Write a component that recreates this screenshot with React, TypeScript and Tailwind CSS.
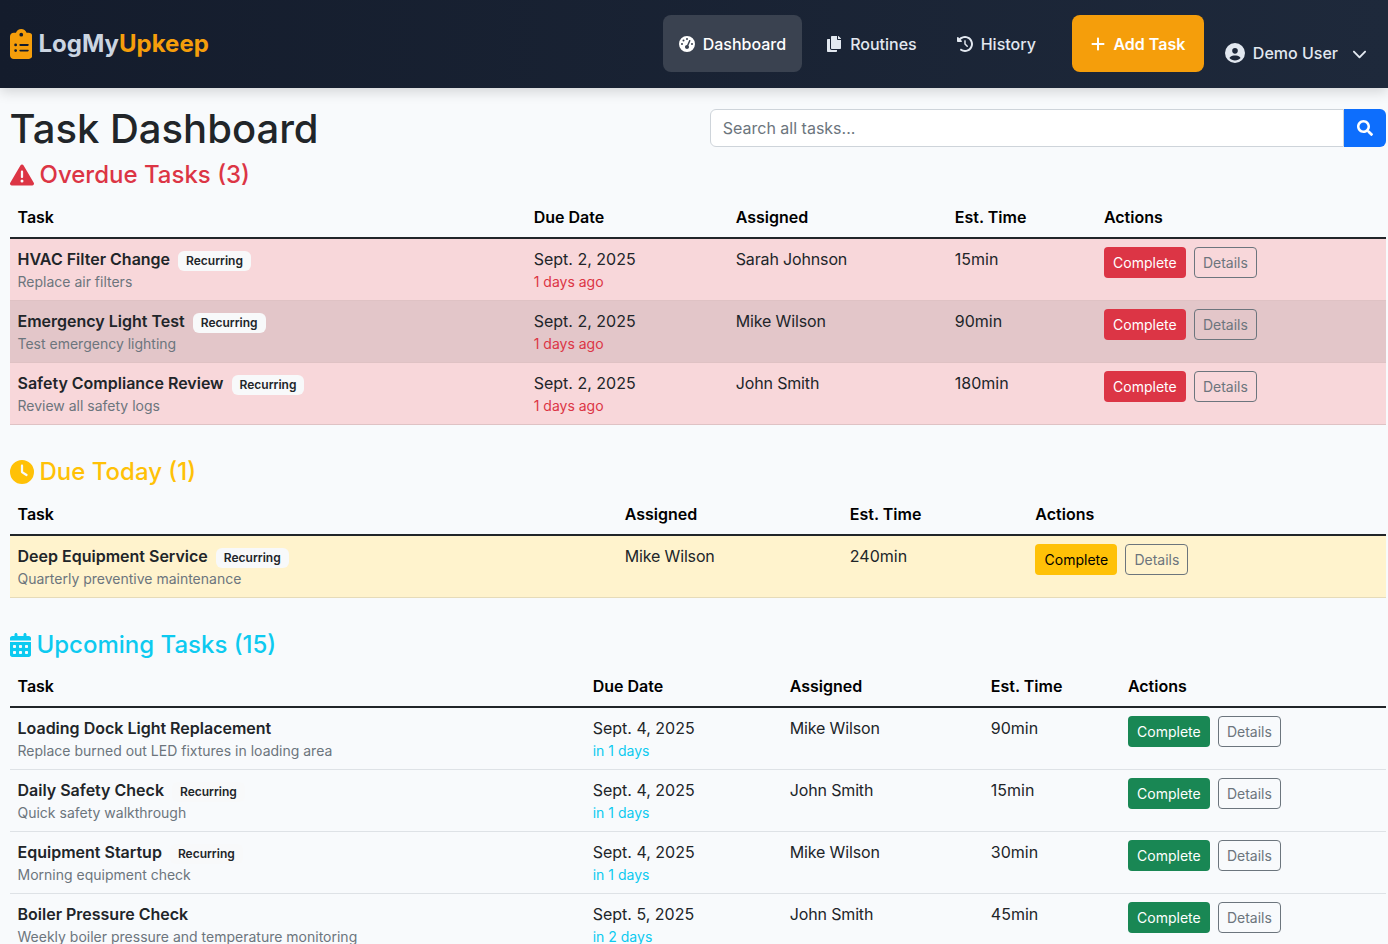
import type { ReactNode } from 'react';
import { FaCopy, FaSearch } from 'react-icons/fa';
import {
  FaCalendarDays,
  FaChevronDown,
  FaCircleUser,
  FaClipboardList,
  FaClock,
  FaClockRotateLeft,
  FaGaugeHigh,
  FaPlus,
  FaTriangleExclamation,
} from 'react-icons/fa6';

type Task = {
  title: string;
  description: string;
  recurring?: boolean;
  due?: string;
  dueNote?: string;
  assigned: string;
  time: string;
};

const overdueTasks: Task[] = [
  { title: 'HVAC Filter Change', description: 'Replace air filters', recurring: true, due: 'Sept. 2, 2025', dueNote: '1 days ago', assigned: 'Sarah Johnson', time: '15min' },
  { title: 'Emergency Light Test', description: 'Test emergency lighting', recurring: true, due: 'Sept. 2, 2025', dueNote: '1 days ago', assigned: 'Mike Wilson', time: '90min' },
  { title: 'Safety Compliance Review', description: 'Review all safety logs', recurring: true, due: 'Sept. 2, 2025', dueNote: '1 days ago', assigned: 'John Smith', time: '180min' },
];

const todayTasks: Task[] = [
  { title: 'Deep Equipment Service', description: 'Quarterly preventive maintenance', recurring: true, assigned: 'Mike Wilson', time: '240min' },
];

const upcomingTasks: Task[] = [
  { title: 'Loading Dock Light Replacement', description: 'Replace burned out LED fixtures in loading area', due: 'Sept. 4, 2025', dueNote: 'in 1 days', assigned: 'Mike Wilson', time: '90min' },
  { title: 'Daily Safety Check', description: 'Quick safety walkthrough', recurring: true, due: 'Sept. 4, 2025', dueNote: 'in 1 days', assigned: 'John Smith', time: '15min' },
  { title: 'Equipment Startup', description: 'Morning equipment check', recurring: true, due: 'Sept. 4, 2025', dueNote: 'in 1 days', assigned: 'Mike Wilson', time: '30min' },
  { title: 'Boiler Pressure Check', description: 'Weekly boiler pressure and temperature monitoring', due: 'Sept. 5, 2025', dueNote: 'in 2 days', assigned: 'John Smith', time: '45min' },
];

function NavLink({ icon, label, active }: { icon: ReactNode; label: string; active?: boolean }) {
  return (
    <a className={`flex h-[57px] items-center gap-2 rounded-lg px-4 font-medium text-[#e2e8f0] ${active ? 'bg-[#3a4250] text-white' : ''}`}>
      {icon}
      {label}
    </a>
  );
}

function Header() {
  return (
    <header className="flex h-[88px] shrink-0 items-center bg-linear-to-r from-[#141c2c] to-[#1e293b] pb-px pl-[9.5px] pr-[5px] shadow-[0_4px_12px_rgba(0,0,0,0.15)]">
      <a className="flex items-center gap-[6.5px] text-2xl font-bold text-[#cbd5e1]">
        <FaClipboardList size={30} className="w-[22.5px] text-[#f59e0b]" />
        <span>
          LogMy<span className="text-[#f59e0b]">Upkeep</span>
        </span>
      </a>
      <nav className="ml-auto flex items-center">
        <div className="flex items-center gap-2">
          <NavLink active icon={<FaGaugeHigh size={16} />} label="Dashboard" />
          <NavLink icon={<FaCopy size={16} />} label="Routines" />
          <NavLink icon={<FaClockRotateLeft size={16} />} label="History" />
        </div>
        <a className="ml-5 flex h-[57px] w-[132px] items-center justify-center gap-[7px] rounded-lg bg-[#f59e0b] font-semibold text-white">
          <FaPlus size={16} />
          Add Task
        </a>
        <a className="ml-[5px] mt-[19px] flex h-[41px] items-center px-4 font-medium text-[#e2e8f0]">
          <FaCircleUser size={20} />
          <span className="ml-2">Demo User</span>
          <FaChevronDown size={15} className="ml-[14px]" />
        </a>
      </nav>
    </header>
  );
}

function SectionTitle({ icon, label, className }: { icon: ReactNode; label: string; className: string }) {
  return (
    <h2 className={`flex items-center gap-1.5 text-2xl leading-[29px] font-medium ${className}`}>
      {icon}
      {label}
    </h2>
  );
}

type Variant = {
  rowClass: (index: number) => string;
  noteClass: string;
  completeClass: string;
};

const overdueVariant: Variant = {
  rowClass: (index) => (index % 2 === 1 ? 'bg-[#e3c6c9] border-[#dfc2c4]' : 'bg-[#f8d7da] border-[#dfc2c4]'),
  noteClass: 'text-[#dc3545]',
  completeClass: 'bg-[#dc3545] text-white',
};

const todayVariant: Variant = {
  rowClass: () => 'bg-[#fff3cd] border-[#e6dbb9]',
  noteClass: 'text-[#dc3545]',
  completeClass: 'bg-[#ffc107] text-black',
};

const upcomingVariant: Variant = {
  rowClass: () => 'border-[#dee2e6]',
  noteClass: 'text-[#0dcaf0]',
  completeClass: 'bg-[#198754] text-white',
};

function TaskTable({ tasks, variant, colClasses }: { tasks: Task[]; variant: Variant; colClasses: string[] }) {
  const showDue = colClasses.length === 5;
  return (
    <table className="mb-8 w-full table-fixed border-collapse">
      <colgroup>
        {colClasses.map((colClass) => (
          <col key={colClass} className={colClass} />
        ))}
      </colgroup>
      <thead>
        <tr className="border-b-2 border-[#212529] text-left text-black">
          <th className="px-2 py-2 font-semibold">Task</th>
          {showDue ? <th className="px-2 py-2 font-semibold">Due Date</th> : null}
          <th className="px-2 py-2 font-semibold">Assigned</th>
          <th className="px-2 py-2 font-semibold">Est. Time</th>
          <th className="px-2 py-2 font-semibold">Actions</th>
        </tr>
      </thead>
      <tbody>
        {tasks.map((task, index) => (
          <tr key={task.title} className={`border-b align-top ${variant.rowClass(index)}`}>
            <td className="p-2">
              <div className="flex items-center">
                <span className="font-semibold">{task.title}</span>
                {task.recurring ? (
                  <span className="ml-2 mt-1 rounded-md bg-[#f8f9fa] px-2 py-1 text-xs leading-3 font-semibold">
                    Recurring
                  </span>
                ) : null}
              </div>
              <div className="mt-px text-sm text-[#6c757d]">{task.description}</div>
            </td>
            {showDue ? (
              <td className="p-2">
                <div>{task.due}</div>
                <div className={`mt-px text-sm ${variant.noteClass}`}>{task.dueNote}</div>
              </td>
            ) : null}
            <td className="p-2 tracking-[-0.15px]">{task.assigned}</td>
            <td className="p-2">{task.time}</td>
            <td className="p-2">
              <div className="flex gap-2">
                <button className={`h-[31px] w-[82px] rounded text-sm ${variant.completeClass}`}>Complete</button>
                <button className="h-[31px] w-[63px] rounded border border-[#6c757d] text-sm text-[#6c757d]">Details</button>
              </div>
            </td>
          </tr>
        ))}
      </tbody>
    </table>
  );
}

export default function App() {
  return (
    <div className="flex h-[944px] flex-col overflow-hidden bg-[#f8fafc] font-['Inter',sans-serif] text-base text-[#212529]">
      <Header />
      <main className="pl-[9.5px] pr-0.5 pt-[17px]">
        <div className="mb-[7px] flex items-center">
          <h1 className="w-1/2 text-[40px] leading-12 font-medium">Task Dashboard</h1>
          <div className="-mt-[2px] flex w-1/2 pl-3">
            <input
              className="h-[38px] min-w-0 flex-1 rounded-l-md border border-[#ced4da] bg-white px-3 placeholder:text-[#6c757d]"
              placeholder="Search all tasks..."
            />
            <button className="flex h-[38px] w-[42px] items-center justify-center rounded-r-md bg-[#0d6efd] text-white">
              <FaSearch size={16} />
            </button>
          </div>
        </div>

        <SectionTitle icon={<FaTriangleExclamation size={24} />} label="Overdue Tasks (3)" className="mb-2 text-[#dc3545]" />
        <TaskTable
          tasks={overdueTasks}
          variant={overdueVariant}
          colClasses={['w-[516px]', 'w-[202px]', 'w-[219px]', 'w-[149px]', 'w-[290px]']}
        />

        <SectionTitle icon={<FaClock size={24} />} label="Due Today (1)" className="mb-2 text-[#ffc107]" />
        <TaskTable
          tasks={todayTasks}
          variant={todayVariant}
          colClasses={['w-[607px]', 'w-[225px]', 'w-[185.5px]', 'w-[358.5px]']}
        />

        <SectionTitle icon={<FaCalendarDays size={24} className="w-[21px]" />} label="Upcoming Tasks (15)" className="mb-[7px] text-[#0dcaf0]" />
        <TaskTable
          tasks={upcomingTasks}
          variant={upcomingVariant}
          colClasses={['w-[575px]', 'w-[197px]', 'w-[201px]', 'w-[137px]', 'w-[266px]']}
        />
      </main>
    </div>
  );
}
